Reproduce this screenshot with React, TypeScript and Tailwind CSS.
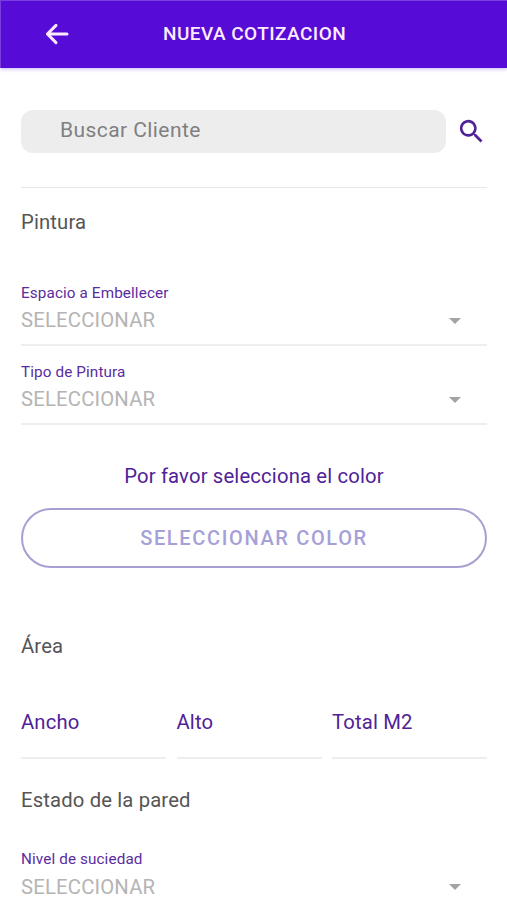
import React from "react";

function SelectField({ label }: { label: string }) {
  return (
    <div className="h-[79px] border-b-2 border-[#eeeeee] pt-[15.5px]">
      <div className="text-[15.25px] leading-[20px] tracking-[0.12px] text-[#5a2ca0]">{label}</div>
      <div className="mt-[4px] flex h-[28px] items-center justify-between pr-[26px] text-[20.25px] tracking-[0.2px] text-[#b4b4b4]">
        <span>SELECCIONAR</span>
        <span className="h-0 w-0 border-x-[6px] border-t-[6px] border-x-transparent border-t-[#a3a3a3]" />
      </div>
    </div>
  );
}

function AreaField({ label }: { label: string }) {
  return (
    <div className="h-[51px] border-b-2 border-[#eeeeee] text-[20.25px] leading-[28px] tracking-[0.15px] text-[#4f2297]">
      {label}
    </div>
  );
}

function SectionTitle({ children }: { children: string }) {
  return <h2 className="text-[20.25px] leading-[28px] tracking-[0.15px] text-[#555]">{children}</h2>;
}

export default function App() {
  return (
    <div className="h-[900px] w-[507px] overflow-hidden bg-white font-[Roboto,sans-serif]">
      <header className="flex h-[68px] items-center border-l border-t border-[#7a3de0] bg-[#560bd6] shadow-[0_1px_4px_rgba(86,11,214,0.3)]">
        <svg
          className="mb-[2px] ml-[44px] h-[22px] w-[24px]"
          viewBox="0 0 24 22"
          fill="none"
          stroke="#fdeaff"
          strokeWidth="3"
          strokeLinecap="round"
          strokeLinejoin="round"
        >
          <path d="M22 11H2.8M11 2.4L2.4 11l8.6 8.6" />
        </svg>
        <h1 className="ml-[94px] text-[19px] font-medium tracking-[0.45px] text-[#fdeaff]">NUEVA COTIZACION</h1>
      </header>
      <main className="pl-[21px] pr-[20px] pt-[42px]">
        <div className="flex h-[43px] items-center">
          <div className="flex h-[43px] w-[425px] items-center rounded-[12px] bg-[#ededed] pb-px pl-[39px] text-[21px] tracking-[0.42px] text-[#808080]">
            Buscar Cliente
          </div>
          <svg className="ml-[10px] h-[31px] w-[31px]" viewBox="0 0 24 24" fill="#4f2297">
            <path d="M15.5 14h-.79l-.28-.27A6.5 6.5 0 1 0 13.73 14.43l.27.28v.79l5 4.99L20.49 19zM9.5 14a4.5 4.5 0 1 1 0-9 4.5 4.5 0 0 1 0 9z" />
          </svg>
        </div>
        <div className="mt-[34px] border-b border-[#e8e8e8]" />
        <div className="mt-[20px]">
          <SectionTitle>Pintura</SectionTitle>
        </div>
        <div className="mt-[31px]">
          <SelectField label="Espacio a Embellecer" />
          <SelectField label="Tipo de Pintura" />
        </div>
        <p className="mt-[37px] text-center text-[20.25px] leading-[28px] tracking-[0.16px] text-[#4f2297]">
          Por favor selecciona el color
        </p>
        <button className="mt-[18px] block h-[60px] w-full rounded-full border-2 border-[#a6a0d2] text-[20px] font-medium tracking-[1.65px] text-[#a6a0d8]">
          SELECCIONAR COLOR
        </button>
        <div className="mt-[64px]">
          <SectionTitle>Área</SectionTitle>
        </div>
        <div className="mt-[48px] grid grid-cols-[145px_145px_155px] gap-[10.5px]">
          <AreaField label="Ancho" />
          <AreaField label="Alto" />
          <AreaField label="Total M2" />
        </div>
        <div className="mt-[27px]">
          <SectionTitle>Estado de la pared</SectionTitle>
        </div>
        <div className="mt-[19.5px]">
          <SelectField label="Nivel de suciedad" />
        </div>
      </main>
    </div>
  );
}
